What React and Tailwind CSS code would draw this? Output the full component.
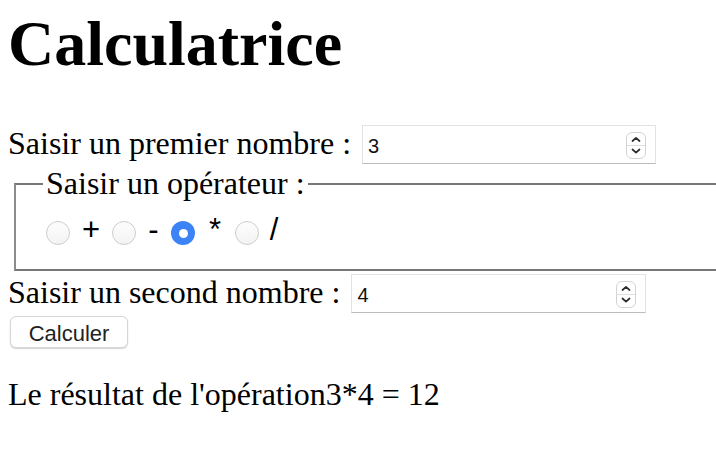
import React from "react";

function Spinner() {
  return (
    <svg
      className="absolute right-[9px] top-[6px]"
      width="20"
      height="27"
      viewBox="0 0 20 27"
    >
      <rect x="0.5" y="0.5" width="19" height="26" rx="5.5" fill="#fff" stroke="#d4d4d4" />
      <line x1="1" y1="13.5" x2="19" y2="13.5" stroke="#dedede" />
      <polyline points="6.5,9 10,5.8 13.5,9" fill="none" stroke="#2b2b2b" strokeWidth="1.7" strokeLinecap="round" strokeLinejoin="round" />
      <polyline points="6.5,17.5 10,20.7 13.5,17.5" fill="none" stroke="#2b2b2b" strokeWidth="1.7" strokeLinecap="round" strokeLinejoin="round" />
    </svg>
  );
}

function NumberBox({ value, width }) {
  return (
    <div
      className={`relative ml-[11px] h-[39px] ${width} border border-[#e3e3e3] border-b-[#bcbcbc] bg-white`}
    >
      <input
        type="text"
        readOnly
        value={value}
        className="h-full w-full bg-transparent pl-[5px] pt-[3px] font-['Liberation_Sans',Arial,sans-serif] text-[20px] text-[#111] outline-none"
      />
      <Spinner />
    </div>
  );
}

function Radio({ checked }) {
  if (checked) {
    return (
      <span className="flex h-[24px] w-[24px] shrink-0 items-center justify-center rounded-full bg-[#3c84f6]">
        <span className="h-[9px] w-[9px] rounded-full bg-white" />
      </span>
    );
  }
  return (
    <span className="h-[24px] w-[24px] shrink-0 rounded-full border border-[#cdcdcd] bg-gradient-to-b from-[#fdfdfd] to-[#f3f3f3]" />
  );
}

export default function App() {
  return (
    <div className="min-h-screen overflow-hidden bg-white pl-2 pt-[7px] font-['Liberation_Serif','Times_New_Roman',serif] text-black">
      <h1 className="text-[64px] font-bold leading-[74px]">Calculatrice</h1>

      <div className="mt-[44px] flex items-start">
        <label className="text-[32px] leading-[36px]">Saisir un premier nombre :</label>
        <NumberBox value="3" width="w-[294px]" />
      </div>

      <fieldset className="ml-[6px] mt-[1px] border-2 border-r-0 border-[#777777] border-l-[#8c8c8c] pb-[16px] pl-[27px]">
        <legend className="px-[3px] text-[32px] leading-[37px]">Saisir un opérateur :</legend>
        <div className="ml-[3px] mt-[11px] flex h-[40px] items-center font-['Liberation_Sans',Arial,sans-serif] text-[31px] leading-[34px]">
          <Radio />
          <span className="mb-[6px] w-[42px] text-center">+</span>
          <Radio />
          <span className="mb-[6px] w-[35px] text-center">-</span>
          <Radio checked />
          <span className="mb-[6px] w-[40px] text-center">*</span>
          <Radio />
          <span className="mb-[6px] w-[30px] text-center">/</span>
        </div>
      </fieldset>

      <div className="mt-[3px] flex items-start">
        <label className="text-[32px] leading-[36px]">Saisir un second nombre :</label>
        <NumberBox value="4" width="w-[295px]" />
      </div>

      <button
        type="button"
        className="ml-[2px] mt-[3px] h-[32px] w-[118px] rounded-[6px] border border-[#d6d6d6] bg-white font-['Liberation_Sans',Arial,sans-serif] text-[22px] text-[#222] shadow-[0_1px_1.5px_rgba(0,0,0,0.18)]"
      >
        Calculer
      </button>

      <p className="mt-[28px] text-[32px] leading-[36px]">Le résultat de l'opération3*4 = 12</p>
    </div>
  );
}
